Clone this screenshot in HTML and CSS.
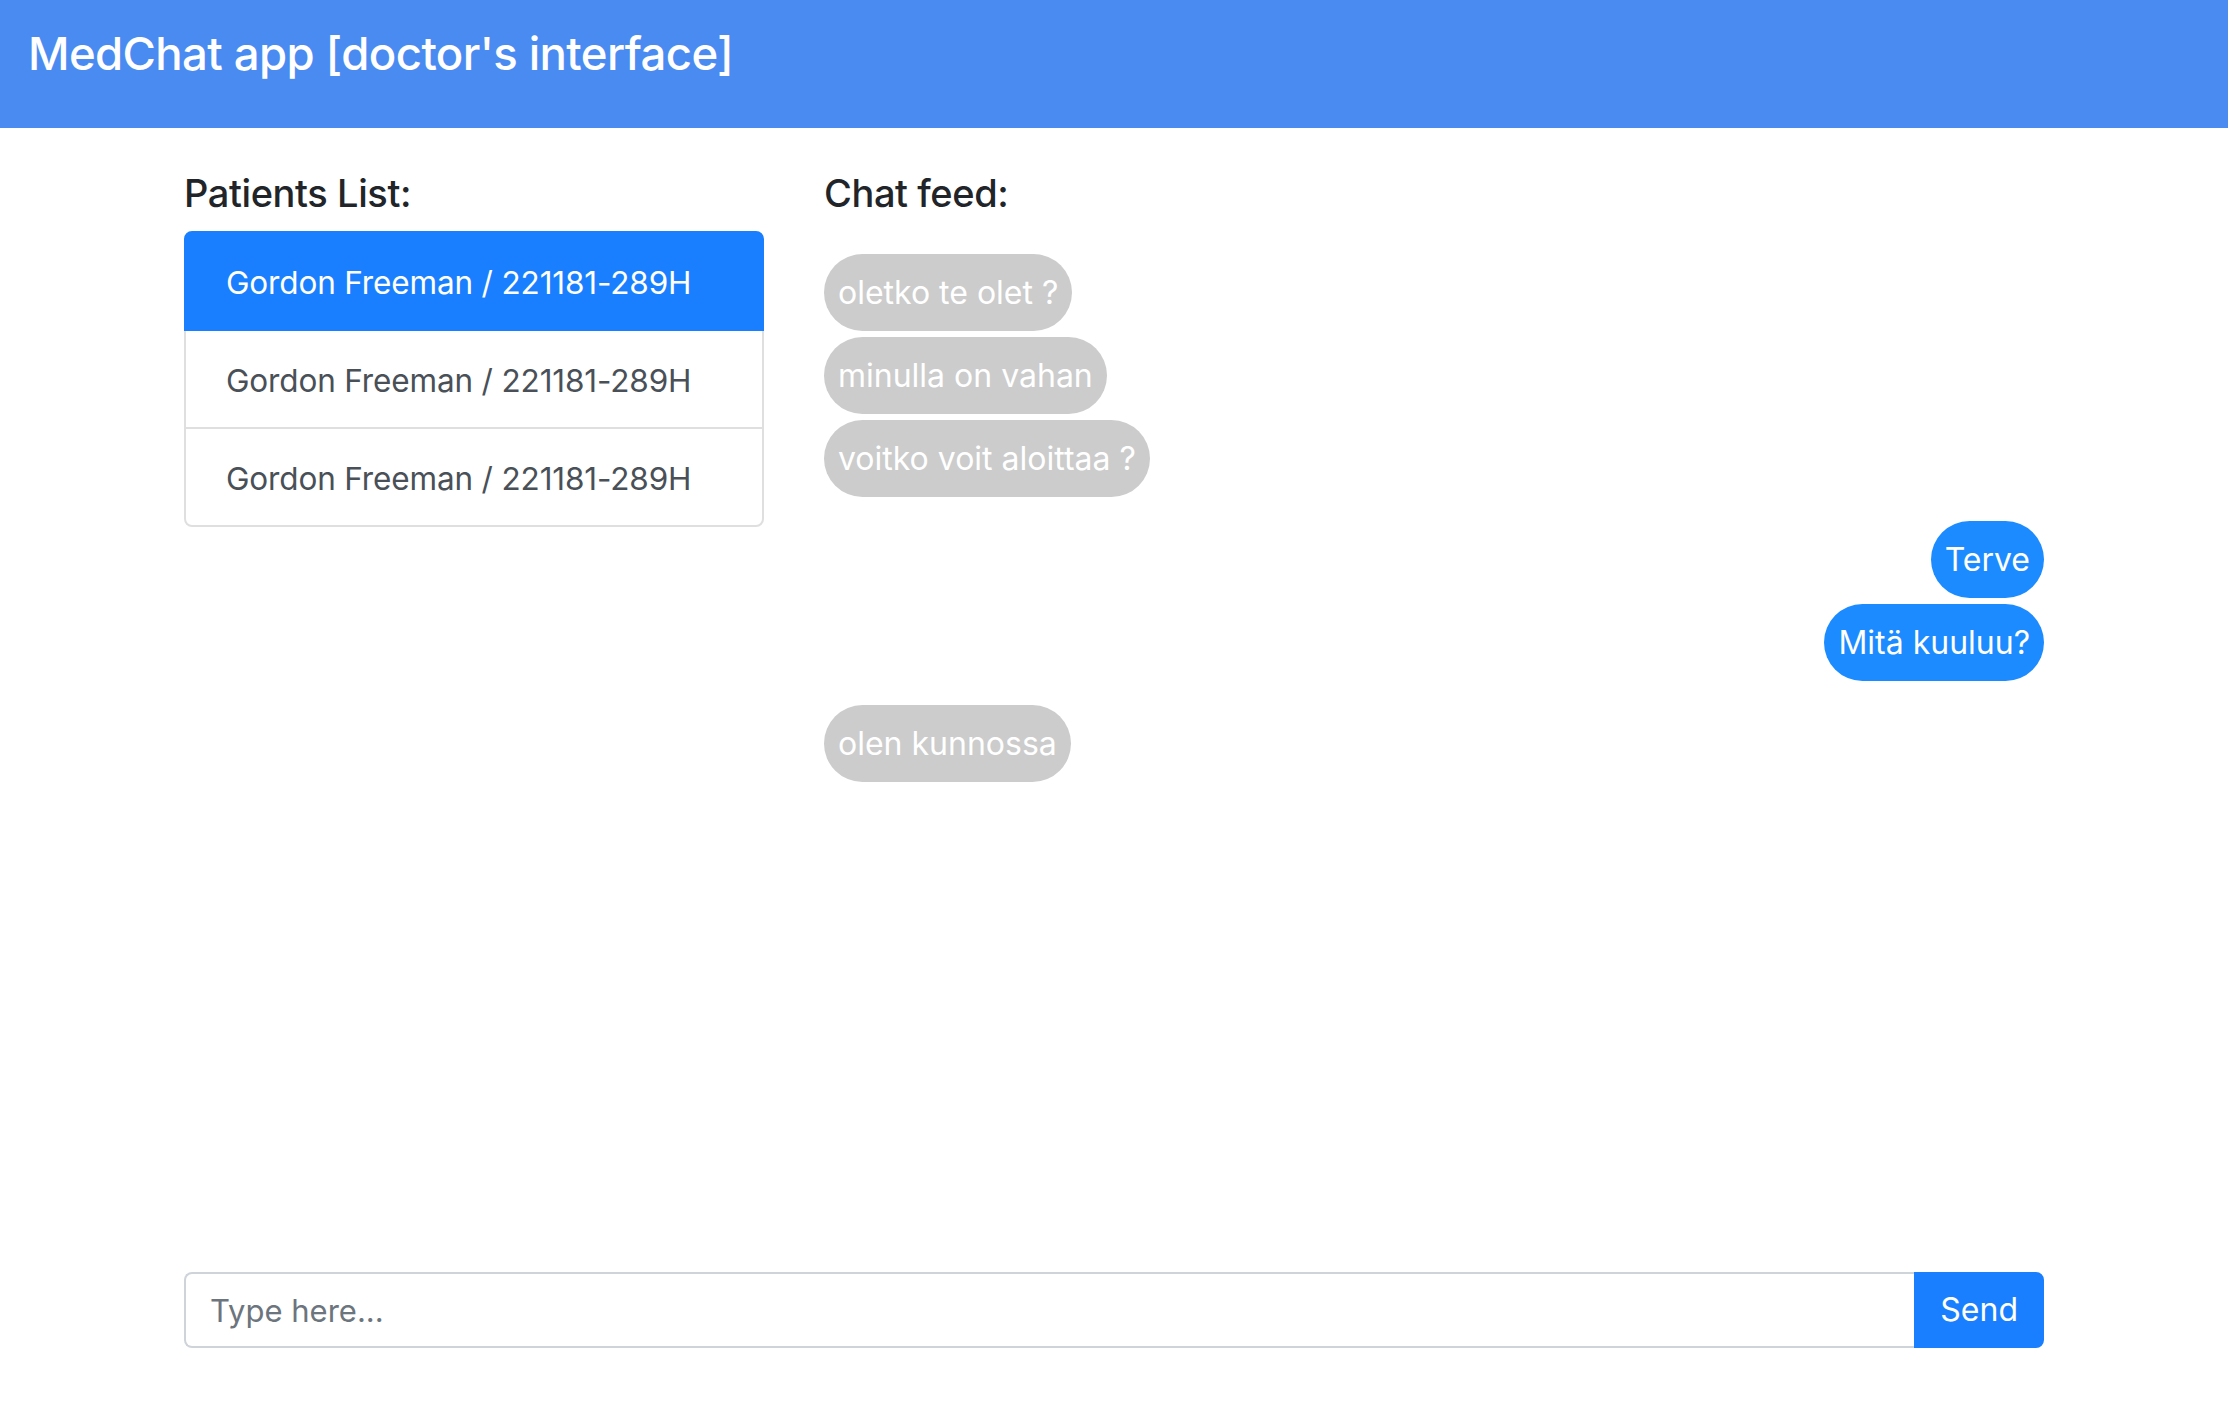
FILE: index.html
```html
<!DOCTYPE html>
<html lang="en">
<head>
<meta charset="utf-8">
<title>MedChat app [doctor's interface]</title>
<link rel="stylesheet" href="styles.css">
</head>
<body>
<header class="topbar">
  <h1 class="brand">MedChat app [doctor's interface]</h1>
</header>
<main class="container">
  <div class="row">
    <section class="col-patients">
      <h5 class="section-title">Patients List:</h5>
      <div class="list-group">
        <a class="list-item active">Gordon Freeman / 221181-289H</a>
        <a class="list-item">Gordon Freeman / 221181-289H</a>
        <a class="list-item">Gordon Freeman / 221181-289H</a>
      </div>
    </section>
    <section class="col-chat">
      <h5 class="section-title">Chat feed:</h5>
      <div class="feed">
        <div class="group in">
          <div class="bubble">oletko te olet ?</div>
          <div class="bubble">minulla on vahan</div>
          <div class="bubble">voitko voit aloittaa ?</div>
        </div>
        <div class="group out">
          <div class="bubble">Terve</div>
          <div class="bubble">Mitä kuuluu?</div>
        </div>
        <div class="group in">
          <div class="bubble">olen kunnossa</div>
        </div>
      </div>
    </section>
  </div>
  <form class="input-group">
    <input class="form-control" type="text" placeholder="Type here...">
    <button class="btn-send" type="button">Send</button>
  </form>
</main>
</body>
</html>
```
FILE: styles.css
```css
* { box-sizing: border-box; }
html, body { margin: 0; padding: 0; }
body {
  font-family: Inter, "Noto Sans", "Liberation Sans", sans-serif;
  color: #212529;
  background: #fff;
  min-height: 100vh;
  display: flex;
  flex-direction: column;
}
.topbar {
  height: 128px;
  background: #4a8bf2;
  padding: 27px 28px 0;
}
.brand {
  margin: 0;
  color: #fff;
  font-size: 45.5px;
  font-weight: 500;
  line-height: 1.2;
  letter-spacing: -0.6px;
}
.container {
  width: 1860px;
  margin: 0 auto;
  flex: 1;
  display: flex;
  flex-direction: column;
}
.row {
  display: grid;
  grid-template-columns: 580px 1fr;
  column-gap: 60px;
  flex: 1;
}
.section-title {
  margin: 41px 0 14px;
  font-size: 38px;
  font-weight: 500;
  line-height: 48px;
  letter-spacing: -0.4px;
  color: #212529;
}
.list-group {
  display: flex;
  flex-direction: column;
}
.list-item {
  display: block;
  padding: 26px 40px 22px;
  font-size: 31.5px;
  line-height: 48px;
  letter-spacing: -0.15px;
  color: #495057;
  background: #fff;
  border: 2px solid #dfdfdf;
  margin-top: -2px;
}
.list-item:first-child {
  margin-top: 0;
  border-radius: 8px 8px 0 0;
}
.list-item:last-child { border-radius: 0 0 8px 8px; }
.list-item.active {
  background: #1a7ffe;
  border-color: #1a7ffe;
  color: #fff;
  position: relative;
}
.feed {
  display: flex;
  flex-direction: column;
  gap: 24px;
  padding-top: 23px;
}
.group {
  display: flex;
  flex-direction: column;
  gap: 6px;
}
.group.in { align-items: flex-start; }
.group.out { align-items: flex-end; }
.bubble {
  padding: 14px 14px;
  font-size: 32px;
  line-height: 49px;
  border-radius: 40px;
  color: #fff;
}
.group.in .bubble { background: #cccccc; }
.group.out .bubble { background: #1c8bff; }
.input-group {
  display: flex;
  margin: 0 0 60px;
}
.form-control {
  flex: 1;
  height: 76px;
  padding: 12px 24px;
  font-family: inherit;
  font-size: 31px;
  line-height: 48px;
  color: #495057;
  border: 2px solid #ced4da;
  border-right: 0;
  border-radius: 8px 0 0 8px;
  outline: none;
}
.form-control::placeholder { color: #6c757d; }
.btn-send {
  height: 76px;
  padding: 12px 24px;
  font-family: inherit;
  font-size: 32px;
  line-height: 48px;
  color: #fff;
  background: #1a7ffe;
  border: 2px solid #1a7ffe;
  border-radius: 0 8px 8px 0;
}
```
